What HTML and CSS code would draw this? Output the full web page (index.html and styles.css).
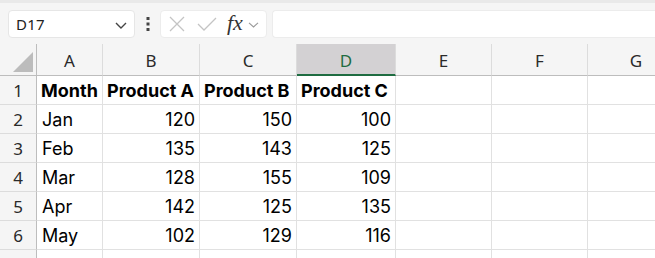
FILE: index.html
```html
<!DOCTYPE html>
<html>
<head>
<meta charset="utf-8">
<link rel="stylesheet" href="styles.css">
</head>
<body>
<div class="app">
  <div class="toolbar">
    <div class="namebox">
      <span class="name">D17</span>
      <svg class="chev" width="12" height="7" viewBox="0 0 12 7"><path d="M1 1 L6 6 L11 1" fill="none" stroke="#444" stroke-width="1.4"/></svg>
    </div>
    <div class="dots">
      <svg width="4" height="14" viewBox="0 0 4 14"><rect x="0.5" y="0" width="3" height="3" fill="#444"/><rect x="0.5" y="5.5" width="3" height="3" fill="#444"/><rect x="0.5" y="11" width="3" height="3" fill="#444"/></svg>
    </div>
    <div class="fbtns">
      <svg class="xicon" width="16" height="16" viewBox="0 0 16 16"><path d="M1 1 L15 15 M15 1 L1 15" stroke="#c4c4c4" stroke-width="1.3" fill="none"/></svg>
      <svg class="check" width="20" height="14" viewBox="0 0 20 14"><path d="M1 7 L7 13 L19 1" stroke="#c4c4c4" stroke-width="1.3" fill="none"/></svg>
      <span class="fx">fx</span>
      <svg class="chev2" width="11" height="6" viewBox="0 0 11 6"><path d="M1 0.8 L5.5 5 L10 0.8" fill="none" stroke="#9a9a9a" stroke-width="1.1"/></svg>
    </div>
    <div class="finput"></div>
  </div>
  <div class="sheet">
    <div class="ch corner"><span class="tri"></span></div>
    <div class="ch">A</div>
    <div class="ch">B</div>
    <div class="ch">C</div>
    <div class="ch sel">D</div>
    <div class="ch">E</div>
    <div class="ch">F</div>
    <div class="ch">G</div>

    <div class="rh">1</div>
    <div class="c b">Month</div><div class="c b">Product A</div><div class="c b">Product B</div><div class="c b">Product C</div><div class="c"></div><div class="c"></div><div class="c"></div>

    <div class="rh">2</div>
    <div class="c">Jan</div><div class="c n">120</div><div class="c n">150</div><div class="c n">100</div><div class="c"></div><div class="c"></div><div class="c"></div>

    <div class="rh">3</div>
    <div class="c">Feb</div><div class="c n">135</div><div class="c n">143</div><div class="c n">125</div><div class="c"></div><div class="c"></div><div class="c"></div>

    <div class="rh">4</div>
    <div class="c">Mar</div><div class="c n">128</div><div class="c n">155</div><div class="c n">109</div><div class="c"></div><div class="c"></div><div class="c"></div>

    <div class="rh">5</div>
    <div class="c">Apr</div><div class="c n">142</div><div class="c n">125</div><div class="c n">135</div><div class="c"></div><div class="c"></div><div class="c"></div>

    <div class="rh">6</div>
    <div class="c">May</div><div class="c n">102</div><div class="c n">129</div><div class="c n">116</div><div class="c"></div><div class="c"></div><div class="c"></div>

    <div class="rh last"></div>
    <div class="c last"></div><div class="c last"></div><div class="c last"></div><div class="c last"></div><div class="c last"></div><div class="c last"></div><div class="c last"></div>
  </div>
</div>
</body>
</html>
```

FILE: styles.css
```css
* { box-sizing: border-box; }
html, body { margin: 0; padding: 0; }
body {
  width: 655px;
  height: 258px;
  overflow: hidden;
  background: #ffffff;
  font-family: "Noto Sans", "Open Sans", sans-serif;
}
.app { width: 655px; height: 258px; overflow: hidden; }
.toolbar {
  height: 44px;
  background: #f5f5f5;
  border-top: 3px solid #e9e9e9;
  padding: 7px 0 0 8px;
  display: flex;
  align-items: flex-start;
}
.namebox {
  width: 127px;
  height: 28px;
  background: #ffffff;
  border: 1px solid #e6e6e6;
  border-radius: 4px;
  display: flex;
  align-items: center;
  justify-content: space-between;
  padding: 0 7px 0 7px;
}
.name {
  font-size: 15px;
  color: #222;
  letter-spacing: 0.2px;
}
.chev { margin-top: 2px; }
.dots {
  width: 25px;
  height: 28px;
  display: flex;
  align-items: center;
  justify-content: center;
}
.fbtns {
  width: 107px;
  height: 28px;
  background: #ffffff;
  border: 1px solid #ececec;
  border-radius: 4px;
  display: flex;
  align-items: center;
  padding-left: 8px;
}
.xicon { margin-right: 12px; }
.check { margin-right: 10px; }
.fx {
  font-family: "Liberation Serif", "DejaVu Serif", serif;
  font-style: italic;
  font-size: 22px;
  color: #333;
  margin-right: 5px;
  line-height: 1;
  margin-top: -3px;
}
.chev2 { margin-top: 1px; }
.finput {
  flex: 1;
  height: 28px;
  margin-left: 5px;
  background: #ffffff;
  border: 1px solid #ececec;
  border-right: none;
  border-radius: 4px 0 0 4px;
}
.sheet {
  display: grid;
  grid-template-columns: 37px 66px 97px 97px 99px 96px 96px 97px;
  grid-template-rows: 32px repeat(6, 29px) 8px;
}
.ch {
  background: #f5f5f5;
  border-right: 1px solid #dcdcdc;
  border-bottom: 1px solid #bdbdbd;
  display: flex;
  align-items: center;
  justify-content: center;
  font-size: 17px;
  color: #2a2a2a;
  padding-top: 1px;
}
.ch.sel {
  background: #d3d1d3;
  color: #1e6c41;
  border-bottom: 2px solid #1e6c41;
  padding-top: 2px;
}
.corner {
  position: relative;
  border-right: 1px solid #bdbdbd;
}
.tri {
  position: absolute;
  right: 3px;
  bottom: 3px;
  width: 0;
  height: 0;
  border-left: 20px solid transparent;
  border-bottom: 20px solid #bcbcbc;
}
.rh {
  background: #f5f5f5;
  border-right: 1px solid #bdbdbd;
  border-bottom: 1px solid #dcdcdc;
  display: flex;
  align-items: center;
  justify-content: center;
  font-size: 17px;
  color: #2a2a2a;
}
.c {
  border-right: 1px solid #e1e1e1;
  border-bottom: 1px solid #e1e1e1;
  font-family: "Inter", "Noto Sans", sans-serif;
  font-size: 18px;
  color: #000;
  display: flex;
  align-items: center;
  padding: 0 4px 0 5px;
  white-space: nowrap;
  overflow: visible;
}
.c.b { font-weight: 700; padding-left: 4px; }
.c.n { justify-content: flex-end; }
.last { border-bottom: none; }
```
